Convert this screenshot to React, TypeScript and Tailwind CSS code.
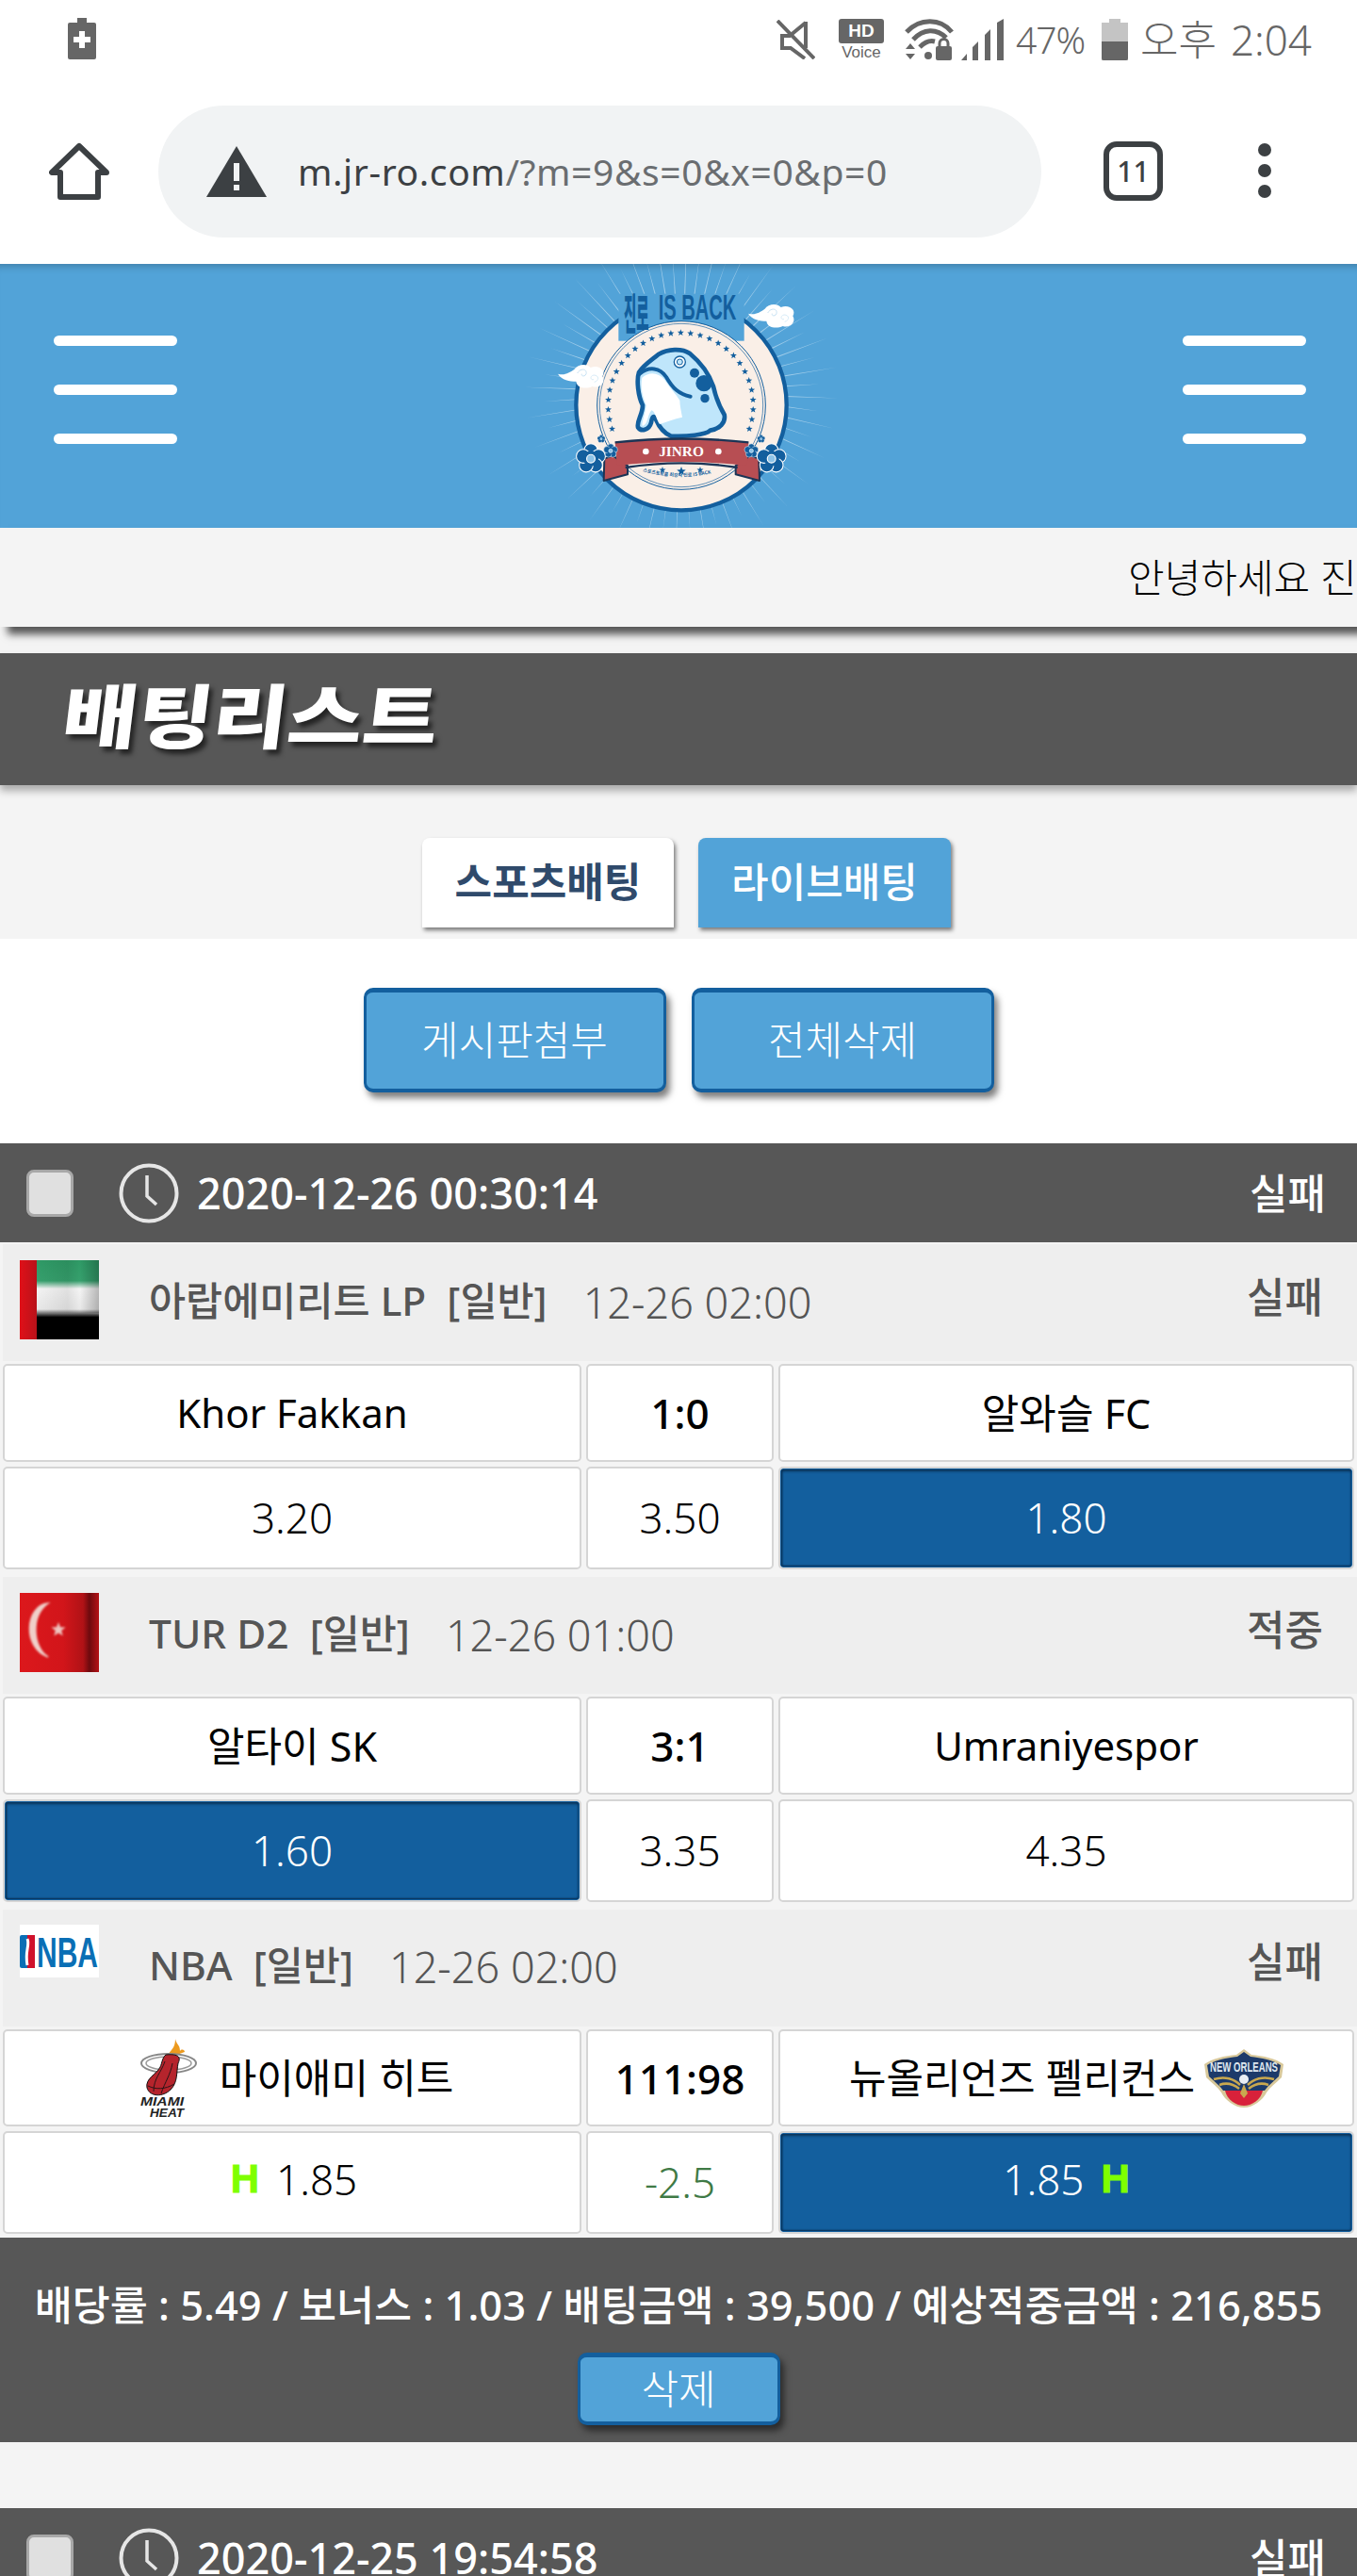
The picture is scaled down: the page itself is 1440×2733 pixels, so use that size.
import React from "react";

const BLUE = "#135f9e";

function Star({ x, y, r, fill = BLUE }: { x: number; y: number; r: number; fill?: string }) {
  const pts: string[] = [];
  for (let i = 0; i < 10; i++) {
    const a = (-90 + i * 36) * (Math.PI / 180);
    const rr = i % 2 === 0 ? r : r * 0.42;
    pts.push(`${(x + rr * Math.cos(a)).toFixed(1)},${(y + rr * Math.sin(a)).toFixed(1)}`);
  }
  return <polygon points={pts.join(" ")} fill={fill} />;
}

function Flower({ x, y, r }: { x: number; y: number; r: number }) {
  const petals = [0, 72, 144, 216, 288].map((d) => {
    const a = ((d - 90) * Math.PI) / 180;
    return { cx: x + r * 0.58 * Math.cos(a), cy: y + r * 0.58 * Math.sin(a) };
  });
  return (
    <g>
      {petals.map((p, i) => (
        <circle key={i} cx={p.cx} cy={p.cy} r={r * 0.5} fill="#135f9e" stroke="#fff" strokeWidth={r * 0.07} />
      ))}
      <circle cx={x} cy={y} r={r * 0.55} fill="#135f9e" />
      <circle cx={x} cy={y} r={r * 0.3} fill="#8fc4e8" stroke="#fff" strokeWidth={r * 0.08} />
    </g>
  );
}

function Cloud({ flip = false, x, y }: { flip?: boolean; x: number; y: number }) {
  return (
    <g transform={`translate(${x} ${y}) scale(${flip ? -1 : 1} 1)`} fill="#fff">
      <path d="M-82 -8 C-60 -2 -45 -12 -30 -22 C-18 -40 10 -42 22 -28 C50 -38 72 -18 60 0 C72 20 50 40 28 32 C6 42 -22 36 -24 16 C-44 16 -70 12 -82 -8 Z" />
      <path d="M-20 -10 C-10 -28 12 -24 8 -8 C4 2 -8 0 -6 -8" fill="none" stroke="#c7e2f4" strokeWidth="3" />
      <path d="M34 18 C50 14 50 -4 32 -4 C20 -2 20 12 32 10" fill="none" stroke="#d8ecf8" strokeWidth="3" />
    </g>
  );
}

function Logo() {
  const rays = Array.from({ length: 64 }, (_, i) => i * 5.625 + 2);
  const stars = Array.from({ length: 29 }, (_, i) => -109 + (i * 218) / 28);
  return (
    <svg viewBox="30 30 1020 840" className="w-[340px] h-[280px] shrink-0">
      {rays.map((d, i) => {
        const a = (d * Math.PI) / 180;
        const r1 = 300;
        const r2 = i % 2 === 0 ? 500 : 440;
        const w = 0.006;
        const p = (r: number, off: number) =>
          `${(543 + r * Math.cos(a + off)).toFixed(1)},${(440 + r * Math.sin(a + off)).toFixed(1)}`;
        return <polygon key={i} points={`${p(r1, -w)} ${p(r1, w)} ${p(r2, 0)}`} fill="#fff" opacity="0.45" />;
      })}
      <circle cx="543" cy="479" r="335" fill="#faefe7" stroke={BLUE} strokeWidth="13" />
      <rect x="343" y="125" width="400" height="150" fill="#52a3d8" />
      <circle cx="543" cy="480" r="268" fill="#faefe7" stroke={BLUE} strokeWidth="3" />
      <circle cx="543" cy="480" r="260" fill="none" stroke={BLUE} strokeWidth="2" />
      <text transform="translate(360 240) scale(0.62 1.95)" fontSize="70" fontWeight="900" fill={BLUE} fontFamily="'Noto Sans CJK KR',sans-serif">
        진로
      </text>
      <text x="470" y="206" fontSize="110" fontWeight="700" fill={BLUE} textLength="248" lengthAdjust="spacingAndGlyphs" fontFamily="'Liberation Sans',sans-serif">
        IS BACK
      </text>
      {stars.map((d, i) => {
        const a = ((d - 90) * Math.PI) / 180;
        return <Star key={i} x={541 + 231 * Math.cos(a)} y={480 + 231 * Math.sin(a)} r={11} />;
      })}
      <path
        d="M470 318 C500 300 545 298 570 315 C600 340 630 375 645 420 C655 465 665 485 680 510 C685 535 665 555 635 560 C620 575 560 580 510 578 C490 570 475 555 462 525 C455 510 450 515 447 535 C440 560 415 565 405 550 C400 530 420 510 420 480 C405 450 400 400 408 375 C425 350 450 335 470 318 Z"
        fill="#bfe6fb"
        stroke={BLUE}
        strokeWidth="14"
      />
      <path
        d="M418 392 C440 372 470 374 490 399 C510 429 525 444 538 464 C538 480 543 500 546 518 C520 523 495 533 474 540 C464 528 460 498 448 496 C434 512 438 540 420 546 C414 540 428 510 431 480 C418 450 413 420 418 392 Z"
        fill="#fff"
      />
      <path d="M410 380 C440 355 475 360 495 390 C515 425 535 445 572 452" fill="none" stroke={BLUE} strokeWidth="12" strokeLinecap="round" />
      <circle cx="538" cy="342" r="18" fill="#fff" stroke={BLUE} strokeWidth="4" />
      <circle cx="538" cy="342" r="9" fill="#bfe6fb" stroke={BLUE} strokeWidth="3" />
      <circle cx="585" cy="377" r="15" fill={BLUE} />
      <circle cx="615" cy="410" r="26" fill={BLUE} />
      <circle cx="618" cy="458" r="14" fill={BLUE} />
      <path d="M325 640 L298 650 L296 720 L372 700 L372 672 Z" fill="#b74e53" stroke="#1b3556" strokeWidth="6" strokeLinejoin="round" />
      <path d="M762 640 L790 650 L792 720 L716 700 L716 672 Z" fill="#b74e53" stroke="#1b3556" strokeWidth="6" strokeLinejoin="round" />
      <path d="M332 598 Q543 575 757 598 L752 672 Q543 648 338 672 Z" fill="#b74e53" />
      <path d="M332 598 Q543 575 757 598" fill="none" stroke="#1b3556" strokeWidth="7" />
      <path d="M365 678 Q543 650 722 678" fill="none" stroke="#1b3556" strokeWidth="7" />
      <text x="543" y="643" textAnchor="middle" fontSize="46" fontWeight="700" fill="#fff" fontFamily="'Liberation Serif',serif">JINRO</text>
      <circle cx="430" cy="627" r="10" fill="#fff" />
      <circle cx="661" cy="627" r="10" fill="#fff" />
      <Star x={483} y={686} r={11} />
      <Star x={543} y={690} r={15} />
      <Star x={603} y={686} r={11} />
      <defs>
        <path id="logo-arc" d="M420 690 Q543 725 662 690" />
      </defs>
      <text fontSize="15" fontWeight="700" fill={BLUE} fontFamily="'Noto Sans CJK KR',sans-serif">
        <textPath href="#logo-arc">스포츠토토를 최강자 진로 IS BACK</textPath>
      </text>
      <Flower x={255} y={650} r={44} />
      <Flower x={830} y={650} r={44} />
      <Flower x={318} y={625} r={21} />
      <Flower x={766} y={625} r={21} />
      <Flower x={288} y={587} r={12} />
      <Flower x={797} y={587} r={12} />
      <Cloud x={838} y={196} />
      <Cloud x={232} y={388} />
    </svg>
  );
}

function Burger() {
  return (
    <div className="w-[131px] flex flex-col gap-[41px] shrink-0 mb-[14px]">
      <div className="h-[11px] rounded-full bg-white" />
      <div className="h-[11px] rounded-full bg-white" />
      <div className="h-[11px] rounded-full bg-white" />
    </div>
  );
}

function StatusBar() {
  return (
    <div className="h-[90px] bg-white flex items-start justify-between pl-[72px] pt-[19px]">
      <svg viewBox="0 0 30 44" className="w-[30px] h-[44px]">
        <path d="M10 0h10v5h8a2 2 0 0 1 2 2v35a2 2 0 0 1-2 2H2a2 2 0 0 1-2-2V7a2 2 0 0 1 2-2h8z" fill="#666" />
        <path d="M12 14h6v6h6v6h-6v6h-6v-6H6v-6h6z" fill="#fff" />
      </svg>
      <div className="flex items-center h-[46px] text-[#666]">
        <svg viewBox="0 0 41 42" className="w-[41px] h-[42px]">
          <path d="M1 1 L40 41" stroke="#666" strokeWidth="4" />
          <path d="M31 2 V30 M31 3 L14 17 H6 V30 H15 L30 41 M6 17 L6 30" fill="none" stroke="#666" strokeWidth="4" />
        </svg>
        <div className="ml-[25px] w-[48px] flex flex-col items-center">
          <div className="w-[48px] h-[26px] rounded-[3px] bg-[#666] text-white text-[19px] leading-[26px] font-bold text-center font-['Liberation_Sans',sans-serif]">HD</div>
          <div className="text-[17px] leading-[18px] mt-[1px] font-['Liberation_Sans',sans-serif]">Voice</div>
        </div>
        <svg viewBox="0 0 52 44" className="ml-[22px] w-[52px] h-[44px]">
          <path d="M2 14 C16 -1 38 -1 50 14" fill="none" stroke="#666" strokeWidth="5" />
          <path d="M9 22 C20 10 34 10 44 20" fill="none" stroke="#666" strokeWidth="5" />
          <path d="M16 30 C22 24 28 23 32 24" fill="none" stroke="#666" strokeWidth="5" />
          <rect x="33" y="29" width="17" height="15" rx="2" fill="#666" />
          <path d="M37 30 v-4 a4 4 0 0 1 9 0 v4" fill="none" stroke="#666" strokeWidth="3" />
          <circle cx="25" cy="39" r="4" fill="#666" />
          <path d="M1 32 L6 26 L11 32 Z M1 37 L11 37 L6 43 Z" fill="#666" />
        </svg>
        <svg viewBox="0 0 45 44" className="ml-[8px] w-[45px] h-[44px]">
          <path d="M0 44 L6 37 V44 Z M12 44 V30 L18 24 V44 Z M25 44 V17 L31 11 V44 Z M38 44 V4 L45 0 V44 Z" fill="#666" />
        </svg>
        <span className="ml-[13px] w-[72px] text-[39px] font-light leading-[46px] tracking-[-1px] whitespace-nowrap font-['Noto_Sans',sans-serif]">47%</span>
        <svg viewBox="0 0 28 44" className="ml-[19px] w-[28px] h-[44px]">
          <path d="M8 0h12v4h8v40H0V4h8z" fill="#c4c4c4" />
          <path d="M0 24h28v18a2 2 0 0 1-2 2H2a2 2 0 0 1-2-2z" fill="#666" />
        </svg>
        <span className="ml-[13px] mr-[48px] w-[182px] flex justify-between text-[44px] font-light leading-[46px] whitespace-nowrap">
          <span>오후</span>
          <span>2:04</span>
        </span>
      </div>
    </div>
  );
}

function BrowserBar() {
  return (
    <div className="h-[190px] bg-white flex items-start pt-[22px]">
      <div className="w-[168px] pl-[52px] pt-[38px] shrink-0">
        <svg viewBox="0 0 64 64" className="w-[64px] h-[64px]">
          <path d="M32 5 L3 33 H12 V59 H52 V33 H61 Z" fill="none" stroke="#3c4043" strokeWidth="6" strokeLinejoin="round" />
        </svg>
      </div>
      <div className="w-[937px] h-[140px] rounded-full bg-[#f1f3f4] flex items-center pl-[51px] shrink-0">
        <svg viewBox="0 0 64 54" className="w-[64px] h-[54px] shrink-0">
          <path d="M32 0 L64 54 H0 Z" fill="#3c4043" />
          <rect x="29" y="18" width="6" height="19" fill="#f1f3f4" />
          <rect x="29" y="41" width="6" height="6" fill="#f1f3f4" />
        </svg>
        <span className="ml-[33px] text-[39px] tracking-[0.6px] whitespace-nowrap text-[#3c4043]">
          m.jr-ro.com<span className="text-[#6a6d70]">/?m=9&amp;s=0&amp;x=0&amp;p=0</span>
        </span>
      </div>
      <div className="ml-[66px] mt-[38px] w-[63px] h-[63px] rounded-[14px] border-[6px] border-[#3c4043] flex items-center justify-center text-[30px] font-medium text-[#3c4043] shrink-0">
        11
      </div>
      <div className="ml-[101px] mt-[40px] flex flex-col gap-[8px] shrink-0">
        <div className="w-[14px] h-[14px] rounded-full bg-[#3c4043]" />
        <div className="w-[14px] h-[14px] rounded-full bg-[#3c4043]" />
        <div className="w-[14px] h-[14px] rounded-full bg-[#3c4043]" />
      </div>
    </div>
  );
}

function Clock() {
  return (
    <svg viewBox="0 0 66 66" className="w-[66px] h-[66px] shrink-0">
      <circle cx="33" cy="33" r="29.5" fill="none" stroke="#e6e6e6" strokeWidth="4" />
      <path d="M31 14 V36 L41 45" fill="none" stroke="#e6e6e6" strokeWidth="3.5" />
    </svg>
  );
}

function CardHeader({ date, result }: { date: string; result: string }) {
  return (
    <div className="h-[105px] bg-[#575757] flex items-center text-white pl-[28px] pr-[33px] shrink-0">
      <div className="w-[50px] h-[50px] rounded-[8px] border-[3px] border-[#a8a8a8] bg-[#e0e0e0] shrink-0" />
      <div className="ml-[47px] mr-[18px]">
        <Clock />
      </div>
      <span className="text-[45px] font-medium leading-none">{date}</span>
      <span className="ml-auto text-[44px] font-medium leading-none">{result}</span>
    </div>
  );
}

function UaeFlag() {
  return (
    <svg viewBox="0 0 84 84" className="w-[84px] h-[84px] shrink-0">
      <defs>
        <linearGradient id="uae-v" x1="0" y1="0" x2="0" y2="1">
          <stop offset="0" stopColor="#2f9a66" />
          <stop offset="0.26" stopColor="#36a06d" />
          <stop offset="0.36" stopColor="#f4f4f4" />
          <stop offset="0.62" stopColor="#e8e8e8" />
          <stop offset="0.72" stopColor="#000" />
          <stop offset="1" stopColor="#000" />
        </linearGradient>
        <linearGradient id="uae-s" x1="0" y1="0" x2="1" y2="0">
          <stop offset="0" stopColor="#000" stopOpacity="0" />
          <stop offset="0.5" stopColor="#000" stopOpacity="0.08" />
          <stop offset="0.7" stopColor="#000" stopOpacity="0" />
          <stop offset="1" stopColor="#000" stopOpacity="0.25" />
        </linearGradient>
        <linearGradient id="uae-r" x1="0" y1="0" x2="1" y2="0">
          <stop offset="0" stopColor="#e01018" />
          <stop offset="1" stopColor="#b8121a" />
        </linearGradient>
      </defs>
      <rect x="17" width="67" height="84" fill="url(#uae-v)" />
      <rect x="17" width="67" height="56" fill="url(#uae-s)" />
      <rect width="18" height="84" fill="url(#uae-r)" />
    </svg>
  );
}

function TurkeyFlag() {
  return (
    <svg viewBox="0 0 84 84" className="w-[84px] h-[84px] shrink-0">
      <defs>
        <linearGradient id="tr-s" x1="0" y1="0" x2="1" y2="0">
          <stop offset="0" stopColor="#dc181c" />
          <stop offset="0.55" stopColor="#d2151a" />
          <stop offset="0.8" stopColor="#b01216" />
          <stop offset="0.88" stopColor="#6e0a0e" />
          <stop offset="1" stopColor="#b51216" />
        </linearGradient>
        <filter id="tr-b">
          <feGaussianBlur stdDeviation="1" />
        </filter>
      </defs>
      <rect width="84" height="84" fill="url(#tr-s)" />
      <g filter="url(#tr-b)">
        <path d="M30 11 C6 13 2 58 30 68 C14 58 11 25 30 11 Z" fill="#f0cfc9" stroke="#f0cfc9" strokeWidth="1.5" />
        <Star x={41} y={39} r={8} fill="#efc4bf" />
      </g>
    </svg>
  );
}

function NbaLogo() {
  return (
    <svg viewBox="0 0 84 56" className="w-[84px] h-[56px] shrink-0">
      <rect width="84" height="56" fill="#fff" />
      <rect x="0" y="11" width="16" height="35" rx="2" fill="#0a6fb5" />
      <rect x="8" y="11" width="8" height="35" fill="#d0112b" />
      <path d="M8 15 C11 22 5 28 8 43" stroke="#fff" strokeWidth="3" fill="none" />
      <text x="18" y="45" fontSize="44" fontWeight="700" fill="#0a6fb5" textLength="65" lengthAdjust="spacingAndGlyphs" fontFamily="'Liberation Sans',sans-serif">NBA</text>
    </svg>
  );
}

function HeatLogo() {
  return (
    <svg viewBox="0 0 60 84" className="w-[60px] h-[84px] shrink-0">
      <path d="M37 0 C38 6 42 6 42 13 C44 10 47 12 47 14 C42 16 36 18 30 16 C32 12 37 10 37 0 Z" fill="#ec9a1e" />
      <ellipse cx="30" cy="26" rx="29" ry="10" fill="none" stroke="#888" strokeWidth="2" />
      <ellipse cx="30" cy="26" rx="24" ry="7" fill="none" stroke="#999" strokeWidth="1.5" />
      <path d="M27 17 C38 16 44 18 40 26 C38 36 40 46 32 54 C24 62 10 62 7 52 C5 42 17 38 21 30 C23 26 23 20 27 17 Z" fill="#b5242c" stroke="#111" strokeWidth="1" />
      <path d="M26 24 C22 36 14 42 14 56 M34 26 C32 38 26 46 22 58 M8 50 C16 54 26 54 36 48" fill="none" stroke="#2b1416" strokeWidth="1" />
      <text x="0" y="71" fontSize="12.5" fontWeight="900" fontStyle="italic" fill="#222" textLength="46" lengthAdjust="spacingAndGlyphs" fontFamily="'Liberation Sans',sans-serif">MIAMI</text>
      <text x="10" y="83" fontSize="12.5" fontWeight="900" fontStyle="italic" fill="#222" textLength="36" lengthAdjust="spacingAndGlyphs" fontFamily="'Liberation Sans',sans-serif">HEAT</text>
    </svg>
  );
}

function PelicansLogo() {
  return (
    <svg viewBox="0 0 84 62" className="w-[84px] h-[62px] shrink-0">
      <path d="M42 0 L50 6 C62 7 76 10 84 16 L82 30 C76 36 70 40 66 46 C62 54 52 62 42 62 C32 62 22 54 18 46 C14 40 8 36 2 30 L0 16 C8 10 22 7 34 6 Z" fill="#d8c89a" />
      <path d="M42 3 L49 8 C60 9 74 12 81 17 L79 29 C74 34 68 38 64 44 L20 44 C16 38 10 34 5 29 L3 17 C10 12 24 9 35 8 Z" fill="#1d3a6a" />
      <path d="M22 44 C24 54 34 60 42 60 C50 60 60 54 62 44 Z" fill="#d8213a" />
      <text x="42" y="24" textAnchor="middle" fontSize="15" fontWeight="700" fill="#dfe7ef" textLength="72" lengthAdjust="spacingAndGlyphs" fontFamily="'Liberation Sans',sans-serif">NEW ORLEANS</text>
      <path d="M10 32 C22 28 32 32 38 38 M74 32 C62 28 52 32 46 38 M16 38 C24 35 32 38 37 42 M68 38 C60 35 52 38 47 42" fill="none" stroke="#c9a84f" strokeWidth="2.5" />
      <circle cx="42" cy="32" r="5" fill="#e8eef4" />
      <path d="M42 37 L38 47 L42 52 L46 47 Z" fill="#c9a84f" />
    </svg>
  );
}

function Cell({ children, selected = false, bold = false, h }: { children?: React.ReactNode; selected?: boolean; bold?: boolean; h: string }) {
  return (
    <div className={`${h} border-2 border-[#d5d5d5] rounded-[5px] bg-white overflow-hidden`}>
      {selected ? (
        <div className="h-full rounded-[3px] border-[1px] border-white/0 bg-[#135f9e] shadow-[inset_0_2px_3px_#0a3358,inset_1px_0_2px_#0a3358,inset_0_-1px_2px_#0a3358] flex items-center justify-center text-white text-[44px] font-light leading-none pb-[2px]">
          {children}
        </div>
      ) : (
        <div className={`h-full flex items-center justify-center leading-none text-black ${bold ? "text-[43px] font-normal" : "text-[44px] font-light pb-[2px]"}`}>
          {children}
        </div>
      )}
    </div>
  );
}

const GRID = "grid grid-cols-[614px_199px_611px] gap-x-[5px] pl-[3px]";

function League({
  flag,
  name,
  time,
  result,
  cap,
}: {
  flag: React.ReactNode;
  name: string;
  time: string;
  result: string;
  cap?: string;
}) {
  return (
    <div className={`ml-[3px] bg-[#eeeeee] h-[124px] flex items-start pl-[18px] pr-[36px] ${cap ?? "pt-[17px]"}`}>
      {flag}
      <span className="ml-[53px] mt-[22px] text-[42.5px] font-medium text-[#555] leading-none whitespace-pre">{name}</span>
      <span className="ml-[38px] mt-[22px] text-[45px] font-light text-[#555] leading-none whitespace-nowrap">{time}</span>
      <span className="ml-auto mt-[17px] text-[44px] font-medium text-[#555] leading-none">{result}</span>
    </div>
  );
}

function H() {
  return <b className="font-['Liberation_Sans',sans-serif] font-bold text-[42px] text-[#7fff00] [-webkit-text-stroke:1px_#7fff00]">H</b>;
}

function ActionButton({ label, w, h, size = "text-[43px]" }: { label: string; w: string; h: string; size?: string }) {
  return (
    <div className={`${w} ${h} rounded-[10px] border-[3px] border-t-[5px] border-b-[4px] border-[#135f9e] bg-[#52a3d8] flex items-center justify-center text-white font-light ${size} shadow-[4px_6px_7px_rgba(0,0,0,0.5)]`}>
      {label}
    </div>
  );
}

export default function App() {
  return (
    <div className="w-[1440px] h-[2733px] overflow-hidden bg-[#f4f4f4] font-['Noto_Sans','Noto_Sans_CJK_KR',sans-serif]">
      <StatusBar />
      <BrowserBar />

      <div className="h-[280px] bg-[#52a3d8] flex items-center justify-between pl-[57px] pr-[54px] shadow-[inset_0_10px_8px_-8px_rgba(0,0,0,0.25)]">
        <Burger />
        <Logo />
        <Burger />
      </div>

      <div className="h-[105px] bg-[#f4f4f4] flex items-center justify-start overflow-hidden pl-[1197px] shadow-[8px_8px_8px_rgba(0,0,0,0.65)]">
        <span className="text-[42px] font-light text-black whitespace-nowrap">안녕하세요 진</span>
      </div>

      <div className="mt-[28px] h-[140px] bg-[#575757] flex items-center pl-[67px] pb-[6px] shadow-[0_6px_8px_rgba(0,0,0,0.3)]">
        <span className="text-[74px] font-black text-white leading-none origin-left scale-x-[1.17] skew-x-[-6deg] [text-shadow:4px_5px_5px_rgba(0,0,0,0.6)]">배팅리스트</span>
      </div>

      <div className="flex gap-[26px] pl-[448px] pt-[56px] pb-[12px]">
        <div className="w-[267px] h-[95px] rounded-t-[8px] bg-white flex items-center justify-center text-[43px] font-bold text-[#2f4a6b] shadow-[2px_3px_4px_rgba(0,0,0,0.5)]">
          스포츠배팅
        </div>
        <div className="w-[268px] h-[95px] rounded-t-[8px] bg-[#52a3d8] flex items-center justify-center text-[43px] font-medium text-white shadow-[2px_3px_4px_rgba(0,0,0,0.5)]">
          라이브배팅
        </div>
      </div>

      <div className="h-[217px] bg-white flex justify-center gap-[27px] pt-[52px]">
        <ActionButton label="게시판첨부" w="w-[321px]" h="h-[111px]" />
        <ActionButton label="전체삭제" w="w-[321px]" h="h-[111px]" />
      </div>

      <CardHeader date="2020-12-26 00:30:14" result="실패" />

      <div className="mt-[2px]">
        <League flag={<UaeFlag />} name="아랍에미리트 LP  [일반]" time="12-26 02:00" result="실패" />
        <div className={`${GRID} mt-[3px] gap-y-[5px]`}>
          <Cell bold h="h-[104px]"><span className="text-[42px]">Khor Fakkan</span></Cell>
          <Cell bold h="h-[104px]"><span className="text-[44px] font-medium">1:0</span></Cell>
          <Cell bold h="h-[104px]">알와슬 FC</Cell>
          <Cell h="h-[109px]">3.20</Cell>
          <Cell h="h-[109px]">3.50</Cell>
          <Cell selected h="h-[109px]">1.80</Cell>
        </div>
      </div>

      <div className="mt-[8px]">
        <League flag={<TurkeyFlag />} name="TUR D2  [일반]" time="12-26 01:00" result="적중" />
        <div className={`${GRID} mt-[3px] gap-y-[5px]`}>
          <Cell bold h="h-[104px]">알타이 SK</Cell>
          <Cell bold h="h-[104px]"><span className="text-[44px] font-medium">3:1</span></Cell>
          <Cell bold h="h-[104px]"><span className="text-[42px]">Umraniyespor</span></Cell>
          <Cell selected h="h-[109px]">1.60</Cell>
          <Cell h="h-[109px]">3.35</Cell>
          <Cell h="h-[109px]">4.35</Cell>
        </div>
      </div>

      <div className="mt-[8px]">
        <League flag={<NbaLogo />} name="NBA  [일반]" time="12-26 02:00" result="실패" cap="pt-[16px]" />
        <div className={`${GRID} mt-[3px] gap-y-[5px]`}>
          <Cell bold h="h-[103px]">
            <span className="flex items-center gap-[24px] ml-[10px]">
              <HeatLogo />
              마이애미 히트
            </span>
          </Cell>
          <Cell bold h="h-[103px]"><span className="text-[44px] font-medium">111:98</span></Cell>
          <Cell bold h="h-[103px]">
            <span className="flex items-center gap-[10px]">
              뉴올리언즈 펠리컨스
              <PelicansLogo />
            </span>
          </Cell>
          <Cell h="h-[109px]">
            <span className="flex items-center gap-[18px] mb-[6px] ml-[4px]">
              <H />
              1.85
            </span>
          </Cell>
          <Cell h="h-[109px]">
            <span className="text-[#3f7a45]">-2.5</span>
          </Cell>
          <Cell selected h="h-[109px]">
            <span className="flex items-center gap-[18px] mb-[6px]">
              1.85
              <H />
            </span>
          </Cell>
        </div>
      </div>

      <div className="mt-[4px] h-[217px] bg-[#575757] flex flex-col items-center pt-[44px]">
        <div className="text-[43.5px] font-medium text-white leading-[54px] whitespace-nowrap">
          배당률 : 5.49 / 보너스 : 1.03 / 배팅금액 : 39,500 / 예상적중금액 : 216,855
        </div>
        <div className="mt-[24px]">
          <ActionButton label="삭제" w="w-[215px]" h="h-[77px]" />
        </div>
      </div>

      <div className="mt-[70px]">
        <CardHeader date="2020-12-25 19:54:58" result="실패" />
      </div>
    </div>
  );
}
